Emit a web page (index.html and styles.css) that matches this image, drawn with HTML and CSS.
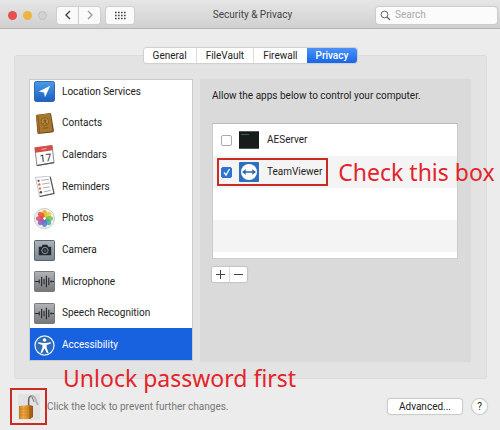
FILE: index.html
```html
<!DOCTYPE html>
<html lang="en">
<head>
    <meta charset="UTF-8">
    <meta name="viewport" content="width=device-width, initial-scale=1.0">
    <title>Security &amp; Privacy</title>
    <link rel="stylesheet" href="styles.css">
</head>
<body>

<div class="window">
    <header class="titlebar">
        <div class="titlebar-left">
            <div class="lights">
                <span class="light red"></span>
                <span class="light yellow"></span>
                <span class="light off"></span>
            </div>
            <div class="nav">
                <button type="button" aria-label="Back"><svg width="8" height="12" viewBox="0 0 8 12"><path d="M6 2L2 6l4 4" fill="none" stroke="#444" stroke-width="1.4"/></svg></button>
                <button type="button" aria-label="Forward"><svg width="8" height="12" viewBox="0 0 8 12"><path d="M2 2l4 4-4 4" fill="none" stroke="#999" stroke-width="1.3"/></svg></button>
            </div>
            <button type="button" class="show-all" aria-label="Show all">
                <svg width="12" height="9" viewBox="0 0 12 9"><path d="M1 1.5h11M1 4.5h11M1 7.5h11" stroke="#444" stroke-width="1.6" stroke-dasharray="1.6 1.4"/></svg>
            </button>
        </div>
        <h1>Security &amp; Privacy</h1>
        <label class="search">
            <svg width="11" height="11" viewBox="0 0 11 11"><circle cx="4.5" cy="4.5" r="3.4" fill="none" stroke="#666"/><path d="M7 7l3 3" stroke="#666" stroke-width="1.2"/></svg>
            <input type="text" placeholder="Search" aria-label="Search">
        </label>
    </header>

    <main>
        <nav class="tabs">
            <button type="button">General</button>
            <button type="button">FileVault</button>
            <button type="button">Firewall</button>
            <button type="button" class="active">Privacy</button>
        </nav>

        <div class="panel">
            <div class="sidebar">
                <ul class="services">
                    <li>
                        <svg class="icon" viewBox="0 0 22 22"><defs><linearGradient id="blue" x2="0" y2="1"><stop stop-color="#4a9be8"/><stop offset="1" stop-color="#1c5fc0"/></linearGradient></defs><rect x=".5" y=".5" width="21" height="21" rx="2" fill="url(#blue)" stroke="#2862ad"/><path d="M17 5L5 11l5.500 1L11.500 17z" fill="#fff"/></svg>
                        Location Services
                    </li>
                    <li>
                        <svg class="icon" viewBox="0 0 22 22"><path d="M2 2l15-2 1 1 3 18-2 1.500L4.500 22l-1-1z" fill="#6f4c1e"/><path d="M2 2l15-1.500 2.500 18.500L4.500 21z" fill="#a9772f"/><path d="M4 2l2 19" stroke="#865a20"/><circle cx="11.500" cy="9" r="4" fill="#b88a3c" stroke="#7c561d" stroke-width=".8"/><circle cx="11.500" cy="8" r="1.300" fill="#7c561d"/><path d="M9 11.500q2.500-3 5 0M9 16l6-.6" stroke="#7c561d" fill="none"/></svg>
                        Contacts
                    </li>
                    <li>
                        <svg class="icon" viewBox="0 0 22 22"><path d="M1 3l18-2.500L21 18.500 3 21.500z" fill="#fcfcfc" stroke="#777" stroke-width=".9"/><path d="M.6 2.500L19 .3l.6 5.200L1.300 8z" fill="#d94b4b"/><path d="M8 4.500l5-.7" stroke="#f4b5b5"/><path d="M3 21.500l18-3" stroke="#555" stroke-width="1.300"/><text class="cal-day" x="6" y="17.500" transform="rotate(-6 11 14)">17</text></svg>
                        Calendars
                    </li>
                    <li>
                        <svg class="icon" viewBox="0 0 22 22"><path d="M1.500 1.500L17 0l4 18-15 3.500z" fill="#fdfdfd" stroke="#aaa" stroke-width=".7"/><path d="M17 1l4 17.500-15 3" fill="none" stroke="#555" stroke-width="1.200"/><path d="M7.500 4.500l8-1M8.500 8.500l8-1.200M9.500 12.500l7-1.200M10.500 16.500l7-1.400" stroke="#aaa"/><circle cx="4.800" cy="5" r="1.200" fill="#555"/><circle cx="5.500" cy="9" r="1.300" fill="#d96c4c"/><circle cx="6.300" cy="13" r="1.300" fill="#db7b46"/><circle cx="7.200" cy="17" r="1.300" fill="#444c70"/></svg>
                        Reminders
                    </li>
                    <li>
                        <svg class="icon" viewBox="0 0 22 22"><circle cx="11" cy="11" r="10.500" fill="#f4f4f4" stroke="#bbb" stroke-width=".8"/><g transform="translate(11 11)" fill-opacity=".85"><ellipse cy="-5" rx="2.700" ry="4" fill="#f5a21e"/><ellipse cy="-5" rx="2.700" ry="4" fill="#d8d32c" transform="rotate(45)"/><ellipse cy="-5" rx="2.700" ry="4" fill="#75bd4a" transform="rotate(90)"/><ellipse cy="-5" rx="2.700" ry="4" fill="#3fae94" transform="rotate(135)"/><ellipse cy="-5" rx="2.700" ry="4" fill="#4b79cf" transform="rotate(180)"/><ellipse cy="-5" rx="2.700" ry="4" fill="#8a5bb8" transform="rotate(225)"/><ellipse cy="-5" rx="2.700" ry="4" fill="#d44a7e" transform="rotate(270)"/><ellipse cy="-5" rx="2.700" ry="4" fill="#ea4b36" transform="rotate(315)"/></g><circle cx="11" cy="11" r="1.200" fill="#fff"/></svg>
                        Photos
                    </li>
                    <li>
                        <svg class="icon" viewBox="0 0 22 22"><defs><linearGradient id="steel" x2="0" y2="1"><stop stop-color="#a9b4bd"/><stop offset="1" stop-color="#7b858d"/></linearGradient></defs><rect x=".5" y=".5" width="21" height="21" rx="1" fill="url(#steel)" stroke="#555e66"/><path d="M5 7h3l1-2h5l1 2h3v9H5z" fill="#25292d"/><circle cx="11.500" cy="11" r="3.300" fill="#25292d" stroke="#909aa2"/><circle cx="11.500" cy="11" r="1.300" fill="#505a62"/></svg>
                        Camera
                    </li>
                    <li>
                        <svg class="icon" viewBox="0 0 22 22"><defs><linearGradient id="grey" x2="0" y2="1"><stop stop-color="#b0b5b7"/><stop offset="1" stop-color="#747678"/></linearGradient></defs><rect x=".5" y=".5" width="21" height="21" rx="1" fill="url(#grey)" stroke="#707375"/><path d="M1 11h4M17 11h4M5.500 9v4M8 6v10M10.500 8v6M13 5v12M15.500 7v8M18 10v2" stroke="#292b2d" stroke-width="1.200"/></svg>
                        Microphone
                    </li>
                    <li>
                        <svg class="icon" viewBox="0 0 22 22"><rect x=".5" y=".5" width="21" height="21" rx="1" fill="url(#grey)" stroke="#707375"/><path d="M1 11h4M17 11h4M5.500 9v4M8 6v10M10.500 8v6M13 5v12M15.500 7v8M18 10v2" stroke="#292b2d" stroke-width="1.200"/></svg>
                        Speech Recognition
                    </li>
                    <li class="selected">
                        <svg class="icon" viewBox="0 0 22 22"><circle cx="11" cy="11" r="10" fill="#2e6bb8" stroke="#e4f1ff" stroke-width="1.300"/><circle cx="11" cy="5.200" r="1.900" fill="#fff"/><path d="M4.500 7.500l5 1h3l5-1 .3 1.500-4.600 1.500v2.500l2 5.500-1.500.6L11 14l-2.700 5.100-1.500-.6 2-5.500v-2.500L4.200 9z" fill="#fff"/></svg>
                        Accessibility
                    </li>
                </ul>
            </div>

            <section class="content">
                <p>Allow the apps below to control your computer.</p>
                <ul class="apps">
                    <li>
                        <label>
                            <input type="checkbox">
                            <svg class="app-icon" viewBox="0 0 20 18"><rect width="20" height="18" fill="#171b1a"/><path d="M0 .5h20M0 17.500h20" stroke="#555"/><path d="M2 3.500h8" stroke="#42604b"/></svg>
                            AEServer
                        </label>
                    </li>
                    <li>
                        <label class="marked">
                            <input type="checkbox" checked>
                            <svg class="app-icon" viewBox="0 0 20 20"><rect width="20" height="20" rx="1" fill="#2d6fbd"/><circle cx="10" cy="10" r="8" fill="#fff"/><path d="M3 10l4-3-.5 2.300h7L13 7l4 3-4 3 .5-2.300h-7L7 13z" fill="#2d64ad"/></svg>
                            TeamViewer
                        </label>
                        <span class="note note-check">Check this box</span>
                    </li>
                    <li></li>
                    <li></li>
                </ul>
                <div class="add-remove">
                    <button type="button" aria-label="Add"><svg width="9" height="9" viewBox="0 0 9 9"><path d="M0 4.500h9M4.500 0v9" stroke="#444"/></svg></button>
                    <button type="button" aria-label="Remove"><svg width="9" height="9" viewBox="0 0 9 9"><path d="M0 4.500h9" stroke="#444"/></svg></button>
                </div>
            </section>
        </div>
    </main>

    <footer>
        <span class="note note-unlock">Unlock password first</span>
        <button type="button" class="lock" aria-label="Lock">
            <svg width="22" height="26" viewBox="0 0 22 26"><defs><linearGradient id="brass"><stop stop-color="#c67a1c"/><stop offset=".3" stop-color="#eda943"/><stop offset=".7" stop-color="#cf811f"/><stop offset="1" stop-color="#8c500f"/></linearGradient></defs><rect width="22" height="26" fill="#e2e2e2"/><path d="M11 12V6q0-4 3-4t4 5l2 4" fill="none" stroke="#b4b4b4" stroke-width="2"/><path d="M10.500 12V6q0-3.500 3-4" fill="none" stroke="#666" stroke-width="1.200"/><path d="M14 3l2 5" stroke="#777"/><path d="M1 12l11-1 3 1v11l-3 2H1z" fill="url(#brass)"/><path d="M1 15h11M1 18h11M1 21h11" stroke="#c67a1c" stroke-width=".4"/><path d="M12 11.500V25" stroke="#8c500f" stroke-width=".8"/></svg>
        </button>
        <span class="hint">Click the lock to prevent further changes.</span>
        <button type="button" class="advanced">Advanced...</button>
        <button type="button" class="help">?</button>
    </footer>
</div>

</body>
</html>
```
FILE: styles.css
```css
* { box-sizing: border-box; }
body { margin: 0; background: #ececec; color: #222; font: 10px/16px Roboto, "Liberation Sans", sans-serif; }
ul, p, h1 { margin: 0; padding: 0; list-style: none; }
button { margin: 0; padding: 0; border: 0; background: #fff; color: #222; font: inherit; }
svg { display: block; flex: none; }
.window { min-height: 100vh; display: flex; flex-direction: column; }

/* title bar */
.titlebar { height: 29px; padding: 2px 3px 0 8px; display: grid; grid-template-columns: 1fr auto 1fr; align-items: center; background: linear-gradient(#e6e6e6, #d0d0d0); border-bottom: 1px solid #b5b5b5; }
.titlebar-left { display: flex; align-items: center; }
.lights { display: flex; gap: 6px; margin-right: 10px; }
.light { width: 9px; height: 9px; border-radius: 50%; }
.red { background: #e4514f; }
.yellow { background: #efb440; }
.off { background: #d2d2d2; border: 1px solid #c0c0c0; }
.nav { display: flex; gap: 1px; margin-right: 6px; }
.nav button, .show-all { height: 17px; width: 21px; display: flex; align-items: center; justify-content: center; background: #fafafa; box-shadow: 0 0 1px 1px #cfcfcf; }
.nav button:first-child { border-radius: 3px 0 0 3px; }
.nav button:last-child { border-radius: 0 3px 3px 0; }
.titlebar .show-all { width: 28px; border-radius: 3px; }
h1 { font-size: 10px; font-weight: 400; color: #444; }
.search { justify-self: end; width: 121px; height: 17px; padding: 0 4px; display: flex; align-items: center; gap: 4px; background: #fbfbfb; border-radius: 3px; box-shadow: 0 0 1px 1px #cbcbcb; }
.search input { width: 100%; min-width: 0; padding: 0; border: 0; outline: 0; background: none; font: inherit; }
.search input::placeholder { color: #aaa; }

/* tabs sit on the top edge of the panel */
main { padding: 19px 13px 0 14px; }
.tabs { position: relative; width: max-content; margin: 0 auto -8px; display: flex; border-radius: 3px; overflow: hidden; box-shadow: 0 0 1px 1px #cfcfcf; }
.tabs button { height: 15px; padding: 0 9px; line-height: 15px; border-left: 1px solid #ddd; }
.tabs button:first-child { border-left: 0; }
.tabs .active { background: linear-gradient(#4b92f7, #1767e8); color: #fff; border: 0; font-weight: 500; }
.panel { padding: 23px 15px 16px 14px; display: flex; gap: 7px; background: #e3e3e3; border: 1px solid #dcdcdc; border-radius: 3px; }

/* the service list is scrolled to its end */
.sidebar { flex: 0 0 164px; height: 282px; display: flex; align-items: flex-end; overflow: hidden; background: #fff; border: 1px solid #cbcbcb; }
.services { width: 100%; height: 285px; display: grid; grid-template-rows: repeat(9, 1fr); }
.services li { padding: 2px 0 0 4px; display: flex; align-items: center; gap: 7px; }
.icon { width: 21px; height: 21px; }
.cal-day { font: 11px Roboto, sans-serif; fill: #333; }
.services .selected { background: #1861df; color: #fff; }

.content { flex: 1; min-width: 0; height: 283px; padding: 9px 13px 0 12px; background: #dadada; }
.apps { margin: 19px 0 8px; padding-bottom: 6px; background: #fff; border: 1px solid #ccc; border-top-color: #bbb; }
.apps li { height: 32px; display: flex; align-items: center; }
.apps li:nth-child(even) { background: #f4f4f4; }
.apps label { height: 28px; margin-left: 4px; padding: 0 4px 0 2px; display: flex; align-items: center; gap: 7px; border: 2px solid transparent; }
.apps .marked { border-color: #c92b25; }
.app-icon { width: 20px; height: 20px; margin-right: 1px; }
input[type="checkbox"] { appearance: none; width: 11px; height: 11px; margin: 0; background: #fff; border: 1px solid #aaa; border-radius: 2px; }
input[type="checkbox"]:checked { border-color: #2f73d2; background: #2f73d2 url("data:image/svg+xml,%3Csvg xmlns='http://www.w3.org/2000/svg' viewBox='0 0 9 9'%3E%3Cpath d='M2 4.500l2 2.500 3.500-6' fill='none' stroke='white' stroke-width='1.300'/%3E%3C/svg%3E"); }
.add-remove { width: max-content; display: flex; gap: 1px; border-radius: 2px; overflow: hidden; background: #ddd; box-shadow: 0 0 1px 1px #c4c4c4; }
.add-remove button { width: 17px; height: 15px; display: flex; align-items: center; justify-content: center; }

/* footer */
footer { position: relative; padding: 9px 13px 5px 10px; display: flex; align-items: center; }
.lock { width: 37px; height: 37px; display: flex; align-items: center; justify-content: center; background: #ececec; border: 2px solid #c92b25; }
.hint { flex: 1; color: #777; }
.advanced { width: 74px; height: 15px; margin-right: 10px; line-height: 15px; border-radius: 3px; box-shadow: 0 0 1px 1px #c8c8c8; }
.help { width: 15px; height: 15px; line-height: 15px; border-radius: 50%; box-shadow: 0 0 1px 1px #c8c8c8; }

/* red annotations */
.note { color: #e3242b; font: 23px/28px "Noto Sans", sans-serif; white-space: nowrap; }
.note-check { margin-left: 10px; }
.note-unlock { position: absolute; left: 63px; top: -15px; }
```
